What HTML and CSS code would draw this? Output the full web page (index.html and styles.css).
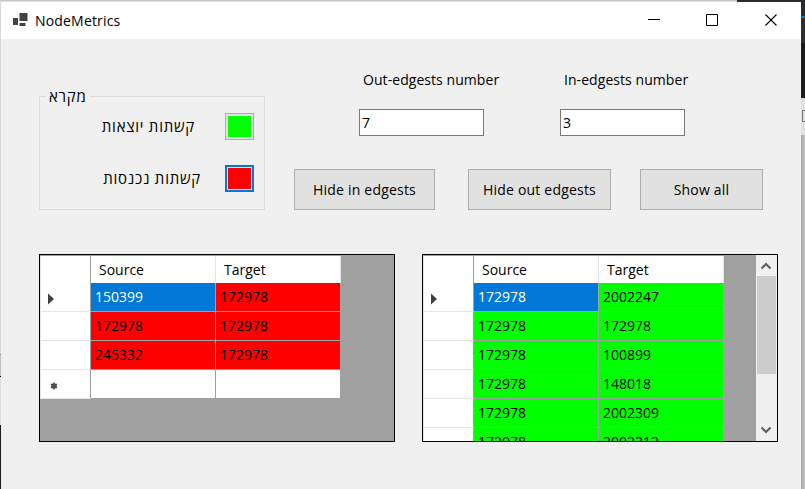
FILE: index.html
```html
<!DOCTYPE html>
<html lang="en">
<head>
<meta charset="utf-8">
<title>NodeMetrics</title>
<link rel="stylesheet" href="styles.css">
</head>
<body>
<div class="desktop-top"><span class="top-dark"></span></div>
<div class="desktop">
  <div class="edge-left"></div>
  <main class="window">
    <header class="titlebar">
      <svg class="app-icon" width="18" height="16" viewBox="0 0 18 16"><g fill="#424242"><rect x="8.500" y="1" width="8" height="8"/><rect x="2" y="6" width="5" height="7"/><rect x="8.500" y="11" width="6" height="3"/></g></svg>
      <h1 class="title">NodeMetrics</h1>
      <svg class="controls" width="130" height="14" viewBox="0 0 130 14" fill="none" stroke="#000"><path d="M0 6.500h12M58.500 1.500h11v11h-11z"/><path d="M117.500 1.500l11 11M128.500 1.500l-11 11" stroke-width="1.100"/></svg>
    </header>
    <div class="content">
      <div class="upper">
        <section class="legend" dir="ltr">
          <h2 class="legend-title">מקרא</h2>
          <div class="legend-row"><span class="heb">קשתות יוצאות</span><button class="swatch green" aria-label="Green"></button></div>
          <div class="legend-row focused"><span class="heb">קשתות נכנסות</span><button class="swatch red" aria-label="Red"></button></div>
        </section>
        <section class="filters">
          <div class="fields">
            <label class="field"><span>Out-edgests number</span><input type="text" value="7"></label>
            <label class="field"><span>In-edgests number</span><input type="text" value="3"></label>
          </div>
          <div class="actions">
            <button class="btn hide-in">Hide in edgests</button>
            <button class="btn hide-out">Hide out edgests</button>
            <button class="btn show">Show all</button>
          </div>
        </section>
      </div>
      <div class="tables">
        <div class="grid-view reds">
          <div class="table">
            <div class="row head"><span class="rh"></span><span class="cell">Source</span><span class="cell">Target</span></div>
            <div class="row"><span class="rh"><svg width="8" height="12" viewBox="0 0 8 12"><path d="M1 .5L7 6L1 11.500z" fill="#404040"/></svg></span><span class="cell sel">150399</span><span class="cell">172978</span></div>
            <div class="row"><span class="rh"></span><span class="cell">172978</span><span class="cell">172978</span></div>
            <div class="row"><span class="rh"></span><span class="cell">245332</span><span class="cell">172978</span></div>
            <div class="row new"><span class="rh"><svg width="8" height="8" viewBox="0 0 8 8"><path d="M4 .5v7M1 2.200l6 3.600M7 2.200L1 5.800" stroke="#505050" stroke-width="1.500"/><circle cx="4" cy="4" r="2.800" fill="#505050"/></svg></span><span class="cell"></span><span class="cell"></span></div>
          </div>
        </div>
        <div class="grid-view greens">
          <div class="table">
            <div class="row head"><span class="rh"></span><span class="cell">Source</span><span class="cell">Target</span></div>
            <div class="row"><span class="rh"><svg width="8" height="12" viewBox="0 0 8 12"><path d="M1 .5L7 6L1 11.500z" fill="#404040"/></svg></span><span class="cell sel">172978</span><span class="cell">2002247</span></div>
            <div class="row"><span class="rh"></span><span class="cell">172978</span><span class="cell">172978</span></div>
            <div class="row"><span class="rh"></span><span class="cell">172978</span><span class="cell">100899</span></div>
            <div class="row"><span class="rh"></span><span class="cell">172978</span><span class="cell">148018</span></div>
            <div class="row"><span class="rh"></span><span class="cell">172978</span><span class="cell">2002309</span></div>
            <div class="row"><span class="rh"></span><span class="cell">172978</span><span class="cell">2002312</span></div>
          </div>
          <div class="scrollbar">
            <svg width="20" height="21" viewBox="0 0 20 21"><path d="M5.500 13.500L10 9l4.500 4.500" fill="none" stroke="#606060" stroke-width="2.200"/></svg>
            <div class="thumb"></div>
            <svg class="down" width="20" height="21" viewBox="0 0 20 21"><path d="M5.500 7.500L10 12l4.500-4.500" fill="none" stroke="#606060" stroke-width="2.200"/></svg>
          </div>
        </div>
      </div>
    </div>
  </main>
  <div class="edge-right"><span class="dark"></span><span class="accent"></span><span class="dark mid"></span><span class="black"></span><span class="pale"><i></i></span><span class="gray"></span></div>
</div>
</body>
</html>
```
FILE: styles.css
```css
* { box-sizing: border-box; }
body {
  margin: 0; width: 805px; height: 489px; overflow: hidden;
  font: 14px/20px "Open Sans", "Noto Sans", sans-serif; color: #000;
  display: flex; flex-direction: column;
}
.desktop-top { height: 2px; background: linear-gradient(#c8c8c8 50%, #dedede 50%); display: flex; justify-content: flex-end; }
.top-dark { width: 68px; background: #292a2d; }
.desktop { flex: 1; display: flex; }
.edge-left { width: 1px; background: linear-gradient(#d8d8d8 0 352px, #909090 352px 353px, #c0c0c0 353px 374px, #000 374px 375px, #dedede 375px 423px, #1b1b1c 423px); }
.window { width: 800px; background: #f0f0f0; }
.titlebar { height: 37px; background: #fff; display: flex; align-items: center; padding: 0 23px 0 10px; }
.app-icon { margin-right: 6px; margin-bottom: 1px; }
.title { font-size: 14px; font-weight: 400; letter-spacing: .18px; margin: 0; flex: 1; }
.controls { margin-bottom: 1px; }
.content { padding: 28px 23px 0 38px; }
.upper { display: flex; height: 143px; gap: 29px; }
.legend { width: 226px; height: 114px; margin-top: 29px; border: 1px solid #dcdcdc; padding: 0 10px; display: flex; flex-direction: column; }
.legend-title { font-size: 15px; font-weight: 400; line-height: 20px; letter-spacing: .75px; margin: -11px auto 0 6px; margin-left: -4px; padding: 0 3px; background: #f0f0f0; width: 44px; height: 20px; white-space: nowrap; }
.legend-row { display: flex; justify-content: flex-end; align-items: center; gap: 30px; height: 27px; margin-top: 7px; }
.legend-row.focused { margin-top: 25px; gap: 24px; }
.heb { font-size: 15px; letter-spacing: .75px; direction: rtl; white-space: nowrap; margin-bottom: 1px; }
.swatch { width: 29px; height: 27px; padding: 2px; border: 1px solid #adadad; }
.swatch.green { background: linear-gradient(#0f0, #0f0) content-box, #e1e1e1; }
.swatch.red { border: 2px solid #0078d7; padding: 1px; background: linear-gradient(#f00, #f00) content-box, #e1e1e1; }
.filters { flex: 1; }
.fields { display: flex; gap: 76px; margin-left: 65px; padding-top: 3px; }
.field { width: 125px; display: flex; flex-direction: column; gap: 19px; white-space: nowrap; letter-spacing: .06px; }
.field span { padding-left: 4px; }
.field input { width: 125px; height: 27px; border: 1px solid #7a7a7a; background: #fff; padding: 0 2px; font: inherit; border-radius: 0; }
.actions { display: flex; margin-top: 33px; }
.btn { height: 41px; border: 1px solid #adadad; background: #e1e1e1; font: inherit; letter-spacing: .2px; color: #000; padding: 0; white-space: nowrap; }
.hide-in { width: 141px; margin-right: 33px; }
.hide-out { width: 143px; margin-right: 29px; }
.show { width: 123px; }
.tables { display: flex; gap: 27px; margin-top: 44px; }
.grid-view { width: 356px; height: 188px; border: 1px solid #000; background: #a0a0a0; overflow: hidden; display: flex; justify-content: space-between; align-items: flex-start; }
.table { width: 301px; }
.row { display: grid; grid-template-columns: 51px 125px 125px; height: 29px; }
.rh { background: #fff; border-right: 1px solid #a0a0a0; border-bottom: 1px solid #e5e5e5; border-left: 1px solid #e5e5e5; display: flex; align-items: center; padding-left: 6px; padding-top: 3px; }
.new .rh { padding-left: 9px; }
.cell { padding: 0 4px; line-height: 28px; border-right: 1px solid #a0a0a0; border-bottom: 1px solid #a0a0a0; white-space: nowrap; }
.reds .cell { background: #f00; }
.greens .cell { background: #0f0; }
.grid-view .sel { background: #0078d7; color: #fff; }
.grid-view .new .cell { background: #fff; }
.head { height: 28px; border-top: 1px solid #a0a0a0; }
.head .rh { border-bottom-color: #a0a0a0; }
.grid-view .head .cell { background: #fff; padding-left: 8px; line-height: 27px; border-right-color: #e5e5e5; }
.scrollbar { width: 21px; height: 186px; background: #f0f0f0; display: flex; flex-direction: column; }
.scrollbar svg { flex: none; }
.thumb { height: 98px; width: 19px; margin-left: 1px; background: #cdcdcd; }
.down { margin-top: auto; }
.edge-right { width: 4px; display: flex; flex-direction: column; }
.dark { height: 14px; background: #292a2d; }
.accent { height: 2px; background: #007acc; }
.mid { height: 25px; background: #2d2d30; }
.black { height: 55px; background: #1b1b1c; }
.pale { height: 37px; background: #e0e0e0; padding: 12px 0 0 1px; }
.pale i { display: block; height: 12px; border: 1px solid #777; border-right: 0; }
.gray { flex: 1; background: linear-gradient(90deg, #aaa, #c0c0c0); }
```
